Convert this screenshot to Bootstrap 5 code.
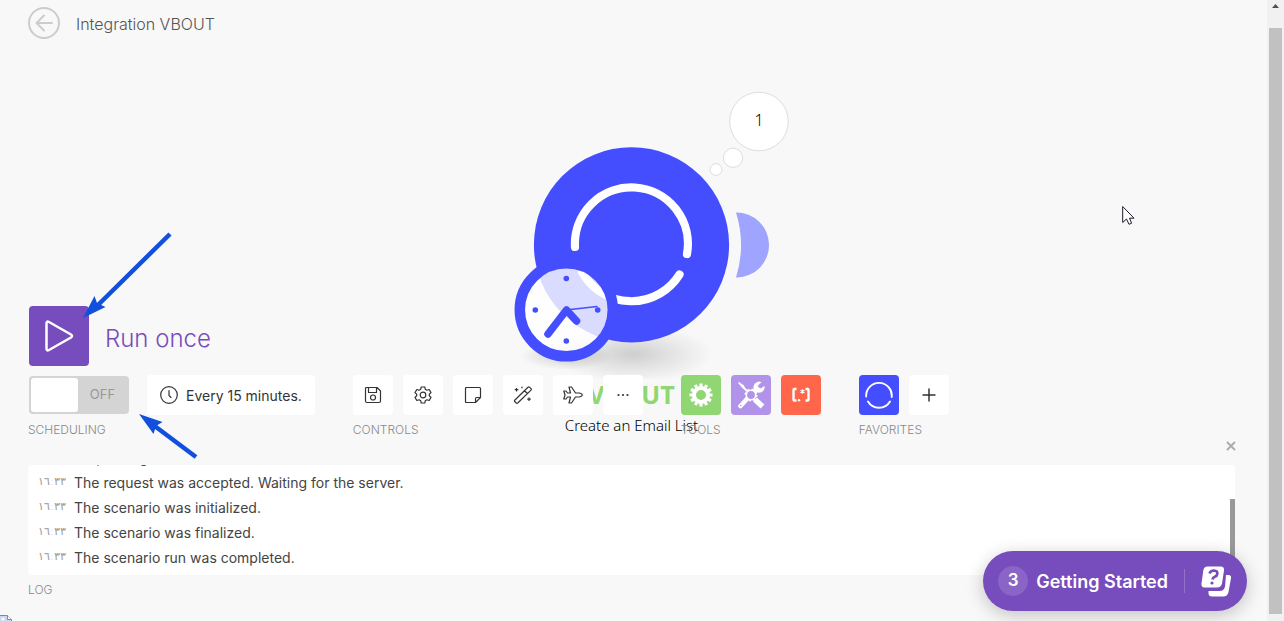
<!DOCTYPE html>
<html lang="en">
<head>
<meta charset="utf-8">
<meta name="viewport" content="width=device-width, initial-scale=1">
<title>Integration VBOUT</title>
<link href="https://cdn.jsdelivr.net/npm/bootstrap@5.3.0/dist/css/bootstrap.min.css" rel="stylesheet">
<style>
  body { background: #f8f8f8; font-family: Inter, "Liberation Sans", sans-serif; color: #444; }
  svg { display: block; }
  .stage { min-width: 0; }
  .title-bar { padding: 7px 28px; gap: 16px; }
  .title-bar h1 { font-size: 16px; font-weight: 300; color: #555; line-height: 24px; padding-top: 2px; }
  .canvas { inset: 0; padding: 80px 4px 0 0; }
  .module-name { font: 700 25px/30px "Open Sans", sans-serif; color: #90d673; }
  .module-action { font: 300 15px/20px "Noto Sans", sans-serif; color: #000; margin-top: 6px; }
  .dock { padding: 0 32px 24px 28px; }
  .run { gap: 16px; color: #774cbc; font-size: 24px; font-weight: 300; }
  .run-icon { width: 60px; height: 60px; margin-left: 1px; border-radius: 4px; background: #774cbc; }
  .run-text { padding-top: 6px; }
  .tools-bar { gap: 16px 38px; margin-top: 9px; }
  .group-title { font-size: 12px; font-weight: 300; line-height: 14px; color: #888; margin: 8px 0 0; }
  .tool-row { gap: 10px; }
  .tile { width: 40px; height: 40px; border-radius: 4px; background: #fff; color: #333; }
  .tile-green { background: #90d673; color: #fff; }
  .tile-violet { background: #b193e9; color: #fff; }
  .tile-red { background: #ff664a; color: #fff; }
  .tile-blue { background: #444eff; color: #fff; }
  .toggle { width: 100px; height: 38px; margin: 1px 8px 1px 1px; border-radius: 4px; background: #d4d4d4; font-size: 13px; color: #999; padding: 2px; }
  .toggle input { appearance: none; width: 47px; height: 34px; margin: 0; background: #fff; border-radius: 3px; }
  .interval { height: 40px; padding: 0 13px; gap: 8px; border-radius: 4px; background: #fff; color: #333; font-size: 14px; }
  .close-log { width: 10px; height: 10px; color: #aaa; margin: 4px -1px 14px 0; }
  .log-box { height: 110px; background: #fff; border-radius: 4px; padding: 0 10px 5px; font-size: 14px; color: #444; }
  .log-box li { line-height: 25px; gap: 10px; }
  .log-box time { width: 26px; font: 300 11px/23px "DejaVu Sans", sans-serif; color: #999; direction: ltr; }
  .log-thumb { right: 0; bottom: 0; width: 5px; height: 76px; background: #999; }
  .notes { left: 80px; top: -76px; pointer-events: none; }
  .starter { right: 20px; bottom: 10px; height: 60px; padding: 0 15px; gap: 8px; border-radius: 30px; background: #774cbc; color: #fff; font-size: 18px; font-weight: 600; box-shadow: 0 4px 18px rgba(0,0,0,.22); }
  .starter-count { width: 30px; height: 30px; border-radius: 50%; background: #8a64c6; font-size: 17px; }
  .starter-icon { border-left: 1px solid #9370ca; height: 24px; padding-left: 16px; margin-left: 8px; }
  .pointer { left: 88%; top: 205px; margin-left: 7px; pointer-events: none; }
  .missing { left: 0; bottom: 0; }
  .page-scroll { width: 17px; background: #f1f1f1; padding: 4px 2px 7px; }
  .page-thumb { width: 13px; background: #c1c1c1; margin-top: 20px; }
</style>
</head>
<body>
<div class="d-flex min-vh-100">
  <main class="stage position-relative flex-grow-1 d-flex flex-column overflow-hidden">
    <section class="canvas position-absolute d-flex flex-column align-items-center" aria-label="Scenario">
      <svg width="341" height="299" viewBox="461 80 341 299" role="img" aria-label="VBOUT module">
        <defs>
          <radialGradient id="shade"><stop offset="0" stop-color="#000" stop-opacity=".17"/><stop offset=".5" stop-color="#000" stop-opacity=".08"/><stop offset="1" stop-color="#000" stop-opacity="0"/></radialGradient>
        </defs>
        <ellipse cx="633" cy="354" rx="80" ry="29" fill="url(#shade)"/>
        <ellipse cx="566" cy="356" rx="46" ry="14" fill="url(#shade)"/>
        <g fill="#fff" stroke="#ddd"><circle cx="759" cy="121.500" r="29.300"/><circle cx="733" cy="157.800" r="9.600"/><circle cx="716" cy="169.500" r="5.900"/></g>
        <text x="759" y="126" font-family="Noto Sans, sans-serif" font-size="16" font-weight="300" text-anchor="middle">1</text>
        <path d="M736 212.500A32.500 32.500 0 0 1 737 277.500L736 277.500A109 109 0 0 0 736 212.500Z" fill="#9fa4fe"/>
        <circle cx="631.500" cy="244.800" r="97.600" fill="#444eff"/>
        <g fill="none" stroke="#fff" stroke-width="8.200" stroke-linecap="round"><path d="M575 247A56.500 56.500 0 1 1 687 254"/><path d="M679.500 274.500A56.500 56.500 0 0 1 582 272"/></g>
        <circle cx="566.300" cy="309.800" r="46.500" fill="#fff" fill-opacity=".8" stroke="#444eff" stroke-width="10.500"/>
        <g fill="#444eff"><circle cx="566.300" cy="278.500" r="2.800"/><circle cx="566.300" cy="341" r="2.800"/><circle cx="535.300" cy="310" r="2.800"/><circle cx="597.700" cy="310" r="2.800"/></g>
        <g fill="none" stroke="#444eff" stroke-linecap="round" stroke-linejoin="round"><path stroke-width="7.500" d="M548 334L566.500 310L576.500 321"/><path stroke-width="1.500" d="M566 310L597 306.500"/></g>
      </svg>
      <div class="module-name">VBOUT</div>
      <div class="module-action">Create an Email List</div>
    </section>

    <header class="title-bar d-flex align-items-center position-relative">
      <a href="#" aria-label="Back"><svg width="32" height="32" viewBox="0 0 32 32" fill="none" stroke="#ccc" stroke-width="2" stroke-linecap="round" stroke-linejoin="round"><circle cx="16" cy="16" r="15"/><path d="M24 16H8.500M16 8.500L8.500 16L16 23.500"/></svg></a>
      <h1 class="mb-0">Integration VBOUT</h1>
    </header>

    <section class="dock position-relative mt-auto">
      <button class="run btn p-0 border-0 d-flex align-items-center">
        <span class="run-icon d-flex align-items-center justify-content-center"><svg width="30" height="32" viewBox="0 0 30 32" fill="none" stroke="#fff" stroke-width="2.500" stroke-linejoin="round"><path d="M2.500 3.500Q2.500 .7 5 2L27 14.500Q29 16 27 17.500L5 30Q2.500 31.300 2.500 28.500Z"/></svg></span>
        <span class="run-text">Run once</span>
      </button>

      <div class="tools-bar d-flex flex-wrap">
        <div>
          <div class="tool-row d-flex">
            <label class="toggle d-flex align-items-center"><input type="checkbox" role="switch"><span class="flex-grow-1 text-center">OFF</span></label>
            <button class="interval btn border-0 d-flex align-items-center"><svg width="18" height="18" viewBox="0 0 18 18" fill="none" stroke="#333" stroke-width="1.200" stroke-linecap="round"><circle cx="9" cy="9" r="8.300"/><path d="M9 4.500V9.500L11 11.500"/></svg>Every 15 minutes.</button>
          </div>
          <p class="group-title">SCHEDULING</p>
        </div>
        <div>
          <div class="tool-row d-flex">
            <button class="tile btn p-0 border-0 d-flex align-items-center justify-content-center" aria-label="Save"><svg width="18" height="18" viewBox="0 0 18 18" fill="none" stroke="currentColor" stroke-width="1.200" stroke-linejoin="round"><path d="M2.500 1.500H13L16.500 5V15Q16.500 16.500 15 16.500H3Q1.500 16.500 1.500 15V2.500Q1.500 1.500 2.500 1.500ZM4.500 1.500V6.500H12.500V1.500"/><circle cx="9" cy="11.500" r="2.500"/></svg></button>
            <button class="tile btn p-0 border-0 d-flex align-items-center justify-content-center" aria-label="Settings"><svg width="18" height="18" viewBox="0 0 18 18" fill="none" stroke="currentColor" stroke-width="1.200" stroke-linejoin="round"><path d="M7.200 1H10.800L11.300 3.300L12.900 4.200L15.200 3.500L17 6.600L15.300 8.200V9.800L17 11.400L15.200 14.500L12.900 13.800L11.300 14.700L10.800 17H7.200L6.700 14.700L5.100 13.800L2.800 14.500L1 11.400L2.700 9.800V8.200L1 6.600L2.800 3.500L5.100 4.200L6.700 3.300Z"/><circle cx="9" cy="9" r="2.800"/></svg></button>
            <button class="tile btn p-0 border-0 d-flex align-items-center justify-content-center" aria-label="Notes"><svg width="18" height="18" viewBox="0 0 18 18" fill="none" stroke="currentColor" stroke-width="1.200" stroke-linejoin="round"><path d="M2.500 1.500H15.500Q16.500 1.500 16.500 2.500V11.500L11.500 16.500H2.500Q1.500 16.500 1.500 15.500V2.500Q1.500 1.500 2.500 1.500ZM16.500 11.500H12.500Q11.500 11.500 11.500 12.500V16.500"/></svg></button>
            <button class="tile btn p-0 border-0 d-flex align-items-center justify-content-center" aria-label="Auto-align"><svg width="20" height="18" viewBox="0 0 20 18" fill="none" stroke="currentColor" stroke-width="1.200" stroke-linejoin="round"><path d="M1.700 14.300L15 1.200Q15.800.6 16.500 1.200L18 2.700Q18.700 3.500 18 4.200L4.700 17Q4 17.600 3.200 17L1.700 15.500Q1.200 15 1.700 14.300ZM11.500 4.700L14.700 7.700M3.500 2V5.500M1.700 3.700H5.300M16 11.500V15M14.200 13.200H17.800M9 .8V2.200M8.300 1.500H9.700"/></svg></button>
            <button class="tile btn p-0 border-0 d-flex align-items-center justify-content-center" aria-label="Explain flow"><svg width="20" height="18" viewBox="0 0 20 18" fill="none" stroke="currentColor" stroke-width="1.200" stroke-linejoin="round"><path d="M16.500 7H12.500L8.500 1H6L7.500 7H4.500L3 5H.8L2 9L.8 13H3L4.500 11H7.500L6 17H8.500L12.500 11H16.500Q19.300 10.300 19.300 9Q19.300 7.700 16.500 7Z"/></svg></button>
            <button class="tile btn p-0 border-0 d-flex align-items-center justify-content-center" aria-label="More"><svg width="18" height="18" viewBox="0 0 18 18" fill="currentColor"><circle cx="4.500" cy="9" r="1.100"/><circle cx="9" cy="9" r="1.100"/><circle cx="13.500" cy="9" r="1.100"/></svg></button>
          </div>
          <p class="group-title">CONTROLS</p>
        </div>
        <div class="ms-n1">
          <div class="tool-row d-flex">
            <button class="tile tile-green btn p-0 border-0 d-flex align-items-center justify-content-center" aria-label="Flow control"><svg width="24" height="24" viewBox="-12 -12 24 24" fill="none" stroke="currentColor"><circle r="7" stroke-width="4"/><g stroke-width="3.200"><path id="teeth" d="M0-11.500V-8M0 8V11.500M-11.500 0H-8M8 0H11.500"/><use href="#teeth" transform="rotate(30)"/><use href="#teeth" transform="rotate(60)"/></g></svg></button>
            <button class="tile tile-violet btn p-0 border-0 d-flex align-items-center justify-content-center" aria-label="Tools"><svg width="28" height="28" viewBox="0 0 28 28" fill="none" stroke="currentColor"><path d="M2 1L7 4.500L8 7.500L6 7.500L1 2Z" fill="currentColor" stroke="none"/><path d="M5 5L10.500 10.500" stroke-width="2"/><path d="M18 18.500L25.500 25.500" stroke-width="5.500"/><path d="M9.500 18.500L3.500 25" stroke-width="4.500" stroke-linecap="round"/><path d="M17.500 10.500L20.500 7.500" stroke-width="4"/><path d="M24.500 1.200A5.600 5.600 0 1 0 27.500 5L23.500 7.500L20.800 5.500L21.500 4Z" fill="currentColor" stroke="none"/><circle cx="14" cy="14" r="4.700" stroke-width="1.600"/><circle cx="14" cy="14" r="5.500" stroke-width="2" stroke-dasharray="2 2.320"/><circle cx="3.800" cy="24.500" r=".8" fill="#b193e9" stroke="none"/></svg></button>
            <button class="tile tile-red btn p-0 border-0 d-flex align-items-center justify-content-center" aria-label="Text parser"><svg width="20" height="16" viewBox="0 0 20 16" fill="none" stroke="currentColor"><path d="M5.500 2H3.500Q2.500 2 2.500 3V12.500Q2.500 13.500 3.500 13.500H5.500M14.500 2H16.500Q17.500 2 17.500 3V12.500Q17.500 13.500 16.500 13.500H14.500" stroke-width="2.400"/><path d="M11.500 2.200V6.800M9.500 3.300L13.500 5.700M13.500 3.300L9.500 5.700" stroke-width="1.200"/><circle cx="8" cy="13.300" r="1.200" fill="currentColor" stroke="none"/></svg></button>
          </div>
          <p class="group-title">TOOLS</p>
        </div>
        <div>
          <div class="tool-row d-flex">
            <button class="tile tile-blue btn p-0 border-0 d-flex align-items-center justify-content-center" aria-label="VBOUT"><svg width="28" height="28" viewBox="0 0 28 28" fill="none" stroke="currentColor" stroke-width="1.900" stroke-linecap="round"><path d="M1.200 15.500A12.800 12.800 0 1 1 26.700 16M25 20.500A12.800 12.800 0 0 1 3 20.500"/></svg></button>
            <button class="tile btn p-0 border-0 d-flex align-items-center justify-content-center" aria-label="Add"><svg width="14" height="14" viewBox="0 0 14 14" stroke="currentColor" stroke-width="1.500"><path d="M7 .5V13.500M.5 7H13.500"/></svg></button>
          </div>
          <p class="group-title">FAVORITES</p>
        </div>
      </div>

      <div class="d-flex justify-content-end"><button class="close-log btn p-0 border-0" aria-label="Close log"><svg width="10" height="10" viewBox="0 0 10 10" stroke="currentColor" stroke-width="1.800"><path d="M1 1L9 9M9 1L1 9"/></svg></button></div>
      <div class="log-box position-relative overflow-hidden d-flex flex-column justify-content-end">
        <ul class="list-unstyled mb-0">
          <li class="d-flex"><time>١٦:٣٣</time>Requesting the server.</li>
          <li class="d-flex"><time>١٦:٣٣</time>The request was accepted. Waiting for the server.</li>
          <li class="d-flex"><time>١٦:٣٣</time>The scenario was initialized.</li>
          <li class="d-flex"><time>١٦:٣٣</time>The scenario was finalized.</li>
          <li class="d-flex"><time>١٦:٣٣</time>The scenario run was completed.</li>
        </ul>
        <div class="log-thumb position-absolute"></div>
      </div>
      <p class="group-title">LOG</p>

      <svg class="notes position-absolute" width="130" height="230" viewBox="80 230 130 230" fill="#1150dd" stroke="#1150dd" aria-hidden="true"><path d="M170 234L98 305M196 457L152 424" stroke-width="4.500"/><path stroke="none" d="M83 318L94.500 296L97 303L105.500 307ZM139 414L162.500 422L156 426L153.500 434Z"/></svg>
    </section>

    <button class="starter btn border-0 position-absolute d-flex align-items-center"><span class="starter-count d-flex align-items-center justify-content-center">3</span>Getting Started<span class="starter-icon d-flex align-items-center"><svg width="31" height="31" viewBox="0 0 31 31"><path d="M25 9H28Q30.500 9.500 30 12L27.500 26Q26.500 30.500 22 30.500H11Q7.500 30.500 7.500 27V25H18.500Q23 25 24 20.500Z" fill="#fff"/><path d="M6.500.5H19.500Q23.500.5 23 4.500L21 17.500Q20 21.500 16 21.500H3.500Q0 21.500.5 17.500L2.300 4.500Q3 .5 6.500.5Z" fill="#fff"/><path d="M8.500 7.500Q9.500 4.500 13 4.500Q16.800 4.700 16.300 8Q16 10 13.800 10.800Q11.800 11.500 11.500 13.500" fill="none" stroke="#774cbc" stroke-width="2.700"/><circle cx="11" cy="17" r="1.600" fill="#774cbc"/></svg></span></button>

    <svg class="pointer position-absolute" width="13" height="21" viewBox="0 0 13 21" fill="#fff" stroke="#1a1a2a" aria-hidden="true"><path d="M.7 1.500V17.500L4.500 14L7 19.300L9.600 18.200L7.500 13.200H12Z"/></svg>
    <svg class="missing position-absolute" width="12" height="6" viewBox="0 0 12 6" fill="#c6d9f5" stroke="#888" aria-hidden="true"><path d="M-1 .5H7.500L11.500 4.500V7H-1Z"/><path d="M7.500.5V4.500H11.500" fill="#fff"/><circle cx="3" cy="4" r="1.500" fill="#fff" stroke="none"/></svg>
  </main>

  <div class="page-scroll flex-shrink-0 d-flex flex-column align-items-center" aria-hidden="true">
    <svg width="7" height="4" viewBox="0 0 7 4"><path d="M0 4L3.500 0L7 4Z" fill="#505050"/></svg>
    <div class="page-thumb flex-grow-1"></div>
  </div>
</div>
<script src="https://cdn.jsdelivr.net/npm/bootstrap@5.3.0/dist/js/bootstrap.bundle.min.js"></script>
</body>
</html>
